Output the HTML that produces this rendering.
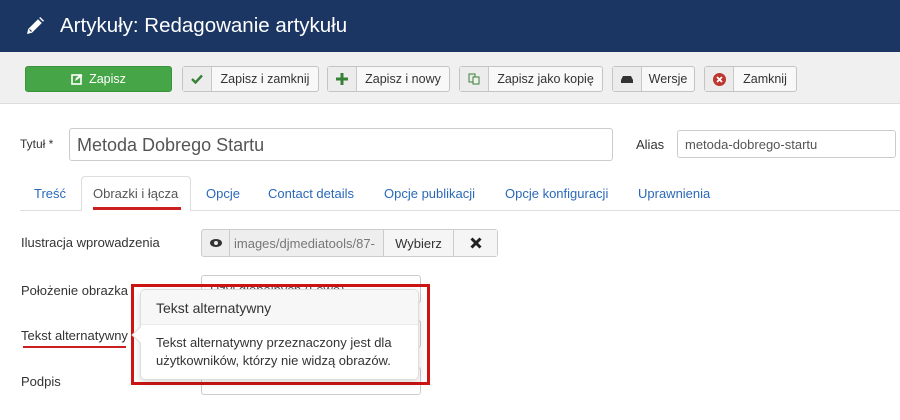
<!DOCTYPE html>
<html><head><meta charset="utf-8"><style>
*{box-sizing:border-box;margin:0;padding:0}
body{width:900px;height:420px;overflow:hidden;background:#fff;font-family:"Liberation Sans",sans-serif;color:#333;position:relative;font-size:13px}
.abs{position:absolute}
.hdr{left:0;top:0;width:900px;height:52px;background:#1b3663}
.hdr h1{position:absolute;left:60px;top:14px;font-size:20.5px;font-weight:normal;color:#fff}
.tb{left:0;top:52px;width:900px;height:52px;background:#f0f0f0;border-bottom:1px solid #ddd}
.btn{position:absolute;top:66px;height:26px;border:1px solid #c4c4c4;border-radius:3px;background:#f8f8f8;font-size:12.5px;color:#333;display:flex;align-items:center}
.btn .ic{width:29px;height:100%;border-right:1px solid #c8c8c8;background:#ececec;display:flex;align-items:center;justify-content:center}
.btn .t{flex:1;text-align:center}
.inp{position:absolute;border:1px solid #ccc;border-radius:3px;background:#fff}
.lbl{position:absolute;font-size:13px;color:#333}
.tab{position:absolute;top:186px;font-size:13px;color:#2a69b8}
</style></head><body>
<div class="abs hdr">
<svg class="abs" style="left:25px;top:16px" width="20" height="20" viewBox="0 0 20 20"><path d="M2 18l1.2-5L13 3.2l3.8 3.8L7 16.8z" fill="#fff"/><path d="M4.5 13.5l2 2" stroke="#1b3663" stroke-width="1.2"/><path d="M14.2 2l1-1 3.8 3.8-1 1z" fill="#fff"/></svg>
<h1>Artykuły: Redagowanie artykułu</h1></div>
<div class="abs tb"></div>
<div class="btn" style="left:25px;width:147px;background:#46a546;border-color:#3a923a;color:#fff;justify-content:center">
<svg width="12" height="12" viewBox="0 0 12 12" style="margin-right:6px"><rect x="1" y="2" width="9" height="9" fill="none" stroke="#fff" stroke-width="1.6"/><path d="M4 8l1-3 5-4 1.5 1.5-5 4z" fill="#fff"/></svg>Zapisz</div>
<div class="btn" style="left:182px;width:137px"><div class="ic"><svg width="12" height="10"><path d="M1 5l3.5 3.5L11 1.5" stroke="#378137" stroke-width="2.4" fill="none"/></svg></div><div class="t">Zapisz i zamknij</div></div>
<div class="btn" style="left:327px;width:123px"><div class="ic"><svg width="12" height="12"><path d="M6 0v12M0 6h12" stroke="#378137" stroke-width="3"/></svg></div><div class="t">Zapisz i nowy</div></div>
<div class="btn" style="left:459px;width:144px"><div class="ic"><svg width="12" height="12"><rect x="1" y="1" width="6" height="8" fill="none" stroke="#378137"/><rect x="5" y="4" width="6" height="7" fill="#f0f0f0" stroke="#378137"/></svg></div><div class="t">Zapisz jako kopię</div></div>
<div class="btn" style="left:612px;width:83px"><div class="ic"><svg width="12" height="8"><path d="M2 1h8l2 4v3H0V5z" fill="#333"/></svg></div><div class="t">Wersje</div></div>
<div class="btn" style="left:704px;width:93px"><div class="ic"><svg width="13" height="13"><circle cx="6.5" cy="6.5" r="6.5" fill="#bd362f"/><path d="M4 4l5 5M9 4l-5 5" stroke="#fff" stroke-width="1.8"/></svg></div><div class="t">Zamknij</div></div>

<div class="lbl" style="left:20px;top:137px;font-size:12px">Tytuł *</div>
<div class="inp" style="left:69px;top:128px;width:544px;height:33px;font-size:18px;color:#555;padding:6px 7px">Metoda Dobrego Startu</div>
<div class="lbl" style="left:636px;top:137px">Alias</div>
<div class="inp" style="left:677px;top:130px;width:219px;height:28px;font-size:13px;color:#555;padding:6px 7px">metoda-dobrego-startu</div>

<div class="abs" style="left:20px;top:210px;width:880px;height:1px;background:#ddd"></div>
<div class="abs" style="left:81px;top:176px;width:110px;height:35px;border:1px solid #ddd;border-bottom:none;border-radius:4px 4px 0 0;background:#fff"></div>
<div class="abs" style="left:93px;top:207px;width:88px;height:3px;background:#cc1f1f"></div>
<div class="tab" style="left:34px">Treść</div>
<div class="tab" style="left:93px;color:#555">Obrazki i łącza</div>
<div class="tab" style="left:206px">Opcje</div>
<div class="tab" style="left:268px">Contact details</div>
<div class="tab" style="left:384px">Opcje publikacji</div>
<div class="tab" style="left:505px">Opcje konfiguracji</div>
<div class="tab" style="left:638px">Uprawnienia</div>

<div class="lbl" style="left:21px;top:235px">Ilustracja wprowadzenia</div>
<div class="inp" style="left:201px;top:229px;width:297px;height:28px;background:#eee;display:flex;font-size:13px">
<div style="width:28px;border-right:1px solid #ccc;display:flex;align-items:center;justify-content:center"><svg width="12" height="8"><ellipse cx="6" cy="4" rx="6" ry="4" fill="#333"/><circle cx="6" cy="4" r="2" fill="#eee"/></svg></div>
<div style="width:154px;border-right:1px solid #ccc;padding:6px 4px;color:#777;overflow:hidden;white-space:nowrap">images/djmediatools/87-</div>
<div style="width:70px;border-right:1px solid #ccc;background:#f5f5f5;text-align:center;padding-top:6px">Wybierz</div>
<div style="flex:1;background:#f5f5f5;display:flex;align-items:center;justify-content:center"><svg width="12" height="12"><path d="M1.5 1.5l9 9M10.5 1.5l-9 9" stroke="#222" stroke-width="3"/></svg></div></div>

<div class="lbl" style="left:21px;top:283px">Położenie obrazka</div>
<div class="inp" style="left:201px;top:275px;width:220px;height:28px;color:#555;padding:6px 8px">Użyj globalnych (Lewo)</div>
<div class="lbl" style="left:21px;top:328px">Tekst alternatywny</div>
<div class="abs" style="left:23px;top:346px;width:103px;height:2px;background:#cc1f1f"></div>
<div class="inp" style="left:201px;top:320px;width:220px;height:28px"></div>
<div class="lbl" style="left:21px;top:374px">Podpis</div>
<div class="inp" style="left:201px;top:367px;width:220px;height:28px"></div>

<div class="abs" style="left:131px;top:284px;width:299px;height:101px;border:3px solid #cc1414"></div>
<div class="abs" style="left:140px;top:289px;width:279px;height:91px;background:#fff;border:1px solid #ddd;border-radius:5px;box-shadow:0 3px 8px rgba(0,0,0,.15);overflow:hidden">
<div style="height:35px;background:#f7f7f7;border-bottom:1px solid #ebebeb;padding:10px 15px;font-size:14px;color:#333">Tekst alternatywny</div>
<div style="padding:9px 15px;font-size:13px;line-height:18px;color:#333">Tekst alternatywny przeznaczony jest dla użytkowników, którzy nie widzą obrazów.</div></div>
<div class="abs" style="left:134px;top:329px;width:12px;height:12px;background:#fff;border-left:1px solid #ddd;border-bottom:1px solid #ddd;transform:rotate(45deg)"></div>
</body></html>
